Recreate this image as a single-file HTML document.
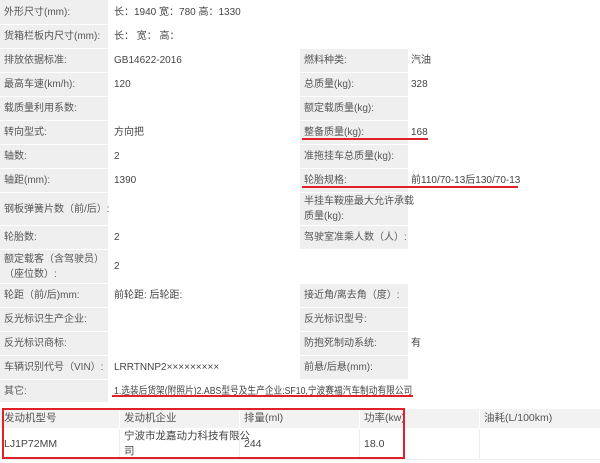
<!DOCTYPE html><html><head><meta charset="utf-8"><style>
*{margin:0;padding:0;box-sizing:border-box}
body{width:600px;height:463px;background:#fff;position:relative;overflow:hidden;font-family:"Liberation Sans","Noto Sans CJK SC",sans-serif;font-size:10px;color:#555}
.c{position:absolute;display:flex;align-items:center;padding-left:4px;line-height:15px;white-space:nowrap}
.g{background:#efefef}
.v{padding-left:4px;color:#444}
.u{position:absolute;height:2px;background:#e0212a}
.sq{display:inline-block;transform:scaleX(0.87);transform-origin:left center}
</style></head><body>
<div id="t"></div>
<script>
var rows=[
[0,24,"外形尺寸(mm):","长：1940 宽：780 高：1330"],
[25,48,"货箱栏板内尺寸(mm):","长：  宽：  高："],
[49,72,"排放依据标准:","GB14622-2016","燃料种类:","汽油"],
[73,96,"最高车速(km/h):","120","总质量(kg):","328"],
[97,120,"载质量利用系数:","","额定载质量(kg):",""],
[121,144,"转向型式:","方向把","整备质量(kg):","168"],
[145,168,"轴数:","2","准拖挂车总质量(kg):",""],
[169,192,"轴距(mm):","1390","轮胎规格:","前110/70-13后130/70-13"],
[193,225,"钢板弹簧片数（前/后）:","","半挂车鞍座最大允许承载<br>质量(kg):",""],
[226,249,"轮胎数:","2","驾驶室准乘人数（人）:",""],
[250,283,"额定载客（含驾驶员）<br>（座位数）:","2"],
[284,307,"轮距（前/后)mm:","前轮距: 后轮距:","接近角/离去角（度）:",""],
[308,331,"反光标识生产企业:","","反光标识型号:",""],
[332,355,"反光标识商标:","","防抱死制动系统:","有"],
[356,379,"车辆识别代号（VIN）:","LRRTNNP2×××××××××","前悬/后悬(mm):",""],
[380,402,"其它:","<span class=\"sq\">1.选装后货架(附照片)2.ABS型号及生产企业:SF10,宁波赛福汽车制动有限公司</span>"]];
var h="";
rows.forEach(function(r){var y=r[0],hh=r[1]-r[0];
h+='<div class="c g" style="left:0;top:'+y+'px;width:108px;height:'+hh+'px">'+r[2]+'</div>';
if(r.length>4){
h+='<div class="c v" style="left:110px;top:'+y+'px;width:190px;height:'+hh+'px">'+r[3]+'</div>';
h+='<div class="c g" style="left:300px;top:'+y+'px;width:108px;height:'+hh+'px">'+r[4]+'</div>';
h+='<div class="c v" style="left:408px;top:'+y+'px;width:192px;height:'+hh+'px;padding-left:3px">'+r[5]+'</div>';
}else{h+='<div class="c v" style="left:110px;top:'+y+'px;width:490px;height:'+hh+'px">'+r[3]+'</div>';}
});
var eh=["发动机型号","发动机企业","排量(ml)","功率(kw)","油耗(L/100km)"];
var ed=["LJ1P72MM","宁波市龙嘉动力科技有限公<br>司","244","18.0",""];
for(var i=0;i<5;i++){
h+='<div class="c" style="left:'+(i*120)+'px;top:409px;width:'+(i<4?119:120)+'px;height:19px;background:#f2f2f2;font-size:10.5px;color:#555">'+eh[i]+'</div>';
h+='<div class="c" style="left:'+(i*120)+'px;top:429px;width:'+(i<4?119:120)+'px;height:30px;font-size:10.5px;color:#444">'+ed[i]+'</div>';
}
h+='<div style="position:absolute;left:0;top:459px;width:600px;height:1px;background:#eee"></div>';
for(var i=1;i<5;i++)h+='<div style="position:absolute;left:'+(i*120-1)+'px;top:429px;width:1px;height:30px;background:#eee"></div>';
h+='<div style="position:absolute;left:2px;top:408px;width:403px;height:51px;border:2px solid #e0212a"></div>';
h+='<div class="u" style="left:302px;top:138px;width:126px"></div>';
h+='<div class="u" style="left:302px;top:186px;width:216px"></div>';
h+='<div class="u" style="left:112px;top:395px;width:301px"></div>';
document.getElementById("t").innerHTML=h;
</script>
</body></html>
